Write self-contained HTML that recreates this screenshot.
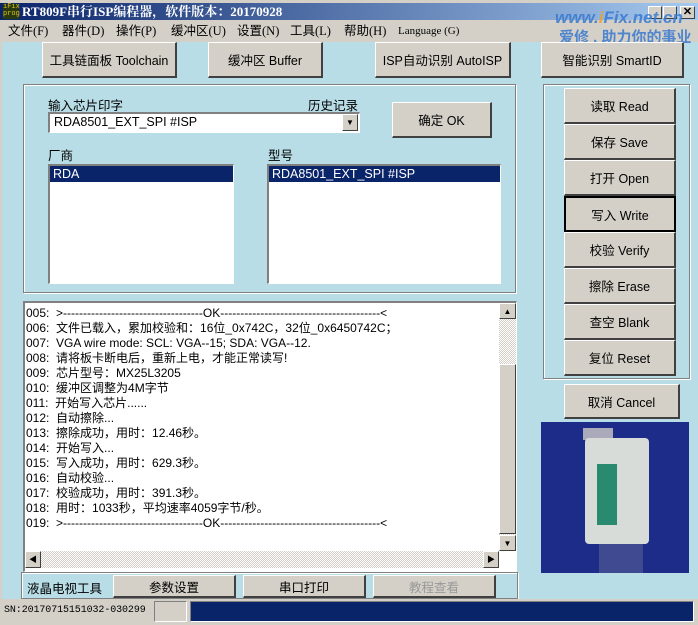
<!DOCTYPE html>
<html><head><meta charset="utf-8"><style>
*{margin:0;padding:0;box-sizing:border-box}
body{width:698px;height:625px;overflow:hidden;position:relative;background:#b9dde6;font-family:"Liberation Sans","Noto Sans CJK SC",sans-serif;font-size:12px;color:#000}
.a{position:absolute}
.btn{position:absolute;background:#d4d0c8;border-top:1px solid #fff;border-left:1px solid #fff;border-right:2px solid #404040;border-bottom:2px solid #404040;display:flex;align-items:center;justify-content:center;font-size:12.5px;white-space:nowrap}
.grp{position:absolute;border:1px solid #808080;box-shadow:inset 1px 1px 0 #fff,1px 1px 0 #fff}
.sunk{position:absolute;background:#fff;border-top:2px solid #808080;border-left:2px solid #808080;border-right:1px solid #fff;border-bottom:1px solid #fff}
.sel{background:#0a246a;color:#fff;padding-left:3px;height:16px;line-height:16px;font-size:12.5px}
.log div{height:15px;line-height:15px;font-size:12px;white-space:nowrap}
.sb{position:absolute;background:#d4d0c8;border-top:1px solid #fff;border-left:1px solid #fff;border-right:1px solid #404040;border-bottom:1px solid #404040;font-size:8px;display:flex;align-items:center;justify-content:center}
.m{position:absolute;top:23px;font-size:12.5px;line-height:17px;white-space:nowrap;font-family:'Liberation Serif','Noto Sans CJK SC',serif}
</style></head><body>
<div class="a" style="left:0;top:0;width:698px;height:3px;background:#d4d0c8"></div>
<div class="a" style="left:0;top:3px;width:698px;height:17px;background:linear-gradient(90deg,#0a246a,#a6caf0)"></div>
<div class="a" style="left:3px;top:4px;width:16px;height:15px;background:#2a3a10;color:#e0c020;font-size:7px;line-height:7px;font-family:'Liberation Mono',monospace">iFix<br>prog</div>
<div class="a" style="left:22px;top:3px;color:#fff;font-weight:bold;font-size:13px;line-height:17px;font-family:'Liberation Serif','Noto Serif CJK SC',serif">RT809F串行ISP编程器，软件版本：20170928</div>
<div class="a" style="left:648px;top:6px;width:14px;height:13px;background:#d4d0c8;border:1px solid #fff;border-right-color:#404040;border-bottom-color:#404040"></div>
<div class="a" style="left:663px;top:6px;width:14px;height:13px;background:#d4d0c8;border:1px solid #fff;border-right-color:#404040;border-bottom-color:#404040"></div>
<div class="a" style="left:680px;top:6px;width:15px;height:13px;background:#d4d0c8;border:1px solid #fff;border-right-color:#404040;border-bottom-color:#404040;font-size:11px;line-height:11px;text-align:center;font-weight:bold">✕</div>
<div class="a" style="left:0;top:20px;width:698px;height:22px;background:#d4d0c8"></div>
<div class="m" style="left:8px">文件(F)</div>
<div class="m" style="left:62px">器件(D)</div>
<div class="m" style="left:116px">操作(P)</div>
<div class="m" style="left:171px">缓冲区(U)</div>
<div class="m" style="left:237px">设置(N)</div>
<div class="m" style="left:290px">工具(L)</div>
<div class="m" style="left:344px">帮助(H)</div>
<div class="m" style="left:398px;font-size:11px">Language (G)</div>
<div class="a" style="left:555px;top:8px;color:#3a7ad0;font-style:italic;font-size:17px;font-weight:bold;opacity:.85">www.<span style="color:#f0a020">i</span>Fix.net.cn</div>
<div class="a" style="left:559px;top:26px;color:#3a7ad0;font-size:15px;font-weight:bold;opacity:.85">爱修 . 助力你的事业</div>
<div class="a" style="left:0;top:42px;width:2px;height:558px;background:#d4d0c8"></div>
<div class="btn" style="left:42px;top:42px;width:135px;height:36px">工具链面板 Toolchain</div>
<div class="btn" style="left:208px;top:42px;width:115px;height:36px">缓冲区 Buffer</div>
<div class="btn" style="left:375px;top:42px;width:136px;height:36px">ISP自动识别 AutoISP</div>
<div class="btn" style="left:541px;top:42px;width:143px;height:36px">智能识别 SmartID</div>
<div class="grp" style="left:23px;top:84px;width:493px;height:209px"></div>
<div class="a" style="left:48px;top:95px;font-size:12.5px">输入芯片印字</div>
<div class="a" style="left:308px;top:95px;font-size:12.5px">历史记录</div>
<div class="sunk" style="left:48px;top:112px;width:312px;height:21px;padding-left:4px;line-height:17px;font-size:12.5px">RDA8501_EXT_SPI #ISP</div>
<div class="sb" style="left:342px;top:114px;width:16px;height:17px">▼</div>
<div class="btn" style="left:392px;top:102px;width:100px;height:36px">确定 OK</div>
<div class="a" style="left:48px;top:145px;font-size:12.5px">厂商</div>
<div class="a" style="left:268px;top:145px;font-size:12.5px">型号</div>
<div class="sunk" style="left:48px;top:164px;width:186px;height:120px"><div class="sel">RDA</div></div>
<div class="sunk" style="left:267px;top:164px;width:234px;height:120px"><div class="sel">RDA8501_EXT_SPI #ISP</div></div>
<div class="sunk log" style="left:23px;top:301px;width:494px;height:271px;padding:3px 0 0 1px;overflow:hidden">
<div>005:&nbsp; &gt;-----------------------------------OK----------------------------------------&lt;</div>
<div>006:&nbsp; 文件已载入，累加校验和：16位_0x742C，32位_0x6450742C；</div>
<div>007:&nbsp; VGA wire mode: SCL: VGA--15; SDA: VGA--12.</div>
<div>008:&nbsp; 请将板卡断电后，重新上电，才能正常读写!</div>
<div>009:&nbsp; 芯片型号：MX25L3205</div>
<div>010:&nbsp; 缓冲区调整为4M字节</div>
<div>011:&nbsp; 开始写入芯片......</div>
<div>012:&nbsp; 自动擦除...</div>
<div>013:&nbsp; 擦除成功，用时：12.46秒。</div>
<div>014:&nbsp; 开始写入...</div>
<div>015:&nbsp; 写入成功，用时：629.3秒。</div>
<div>016:&nbsp; 自动校验...</div>
<div>017:&nbsp; 校验成功，用时：391.3秒。</div>
<div>018:&nbsp; 用时：1033秒，平均速率4059字节/秒。</div>
<div>019:&nbsp; &gt;-----------------------------------OK----------------------------------------&lt;</div>
</div>
<div class="a" style="left:499px;top:303px;width:17px;height:248px;background:repeating-conic-gradient(#d4d0c8 0 25%,#fff 0 50%) 0 0/2px 2px"></div>
<div class="sb" style="left:499px;top:303px;width:17px;height:16px">▲</div>
<div class="sb" style="left:499px;top:364px;width:17px;height:170px"></div>
<div class="sb" style="left:499px;top:535px;width:17px;height:16px">▼</div>
<div class="a" style="left:25px;top:551px;width:474px;height:17px;background:repeating-conic-gradient(#d4d0c8 0 25%,#fff 0 50%) 0 0/2px 2px"></div>
<div class="sb" style="left:25px;top:551px;width:16px;height:17px">◀</div>
<div class="sb" style="left:483px;top:551px;width:16px;height:17px">▶</div>
<div class="grp" style="left:21px;top:572px;width:497px;height:27px"></div>
<div class="a" style="left:27px;top:578px;font-size:12.5px">液晶电视工具</div>
<div class="btn" style="left:113px;top:575px;width:123px;height:23px">参数设置</div>
<div class="btn" style="left:243px;top:575px;width:123px;height:23px">串口打印</div>
<div class="btn" style="left:373px;top:575px;width:123px;height:23px;color:#999">教程查看</div>
<div class="grp" style="left:543px;top:84px;width:147px;height:295px"></div>
<div class="btn" style="left:564px;top:88px;width:112px;height:36px">读取 Read</div>
<div class="btn" style="left:564px;top:124px;width:112px;height:36px">保存 Save</div>
<div class="btn" style="left:564px;top:160px;width:112px;height:36px">打开 Open</div>
<div class="btn" style="left:564px;top:196px;width:112px;height:36px;border:2px solid #000">写入 Write</div>
<div class="btn" style="left:564px;top:232px;width:112px;height:36px">校验 Verify</div>
<div class="btn" style="left:564px;top:268px;width:112px;height:36px">擦除 Erase</div>
<div class="btn" style="left:564px;top:304px;width:112px;height:36px">查空 Blank</div>
<div class="btn" style="left:564px;top:340px;width:112px;height:36px">复位 Reset</div>
<div class="btn" style="left:564px;top:384px;width:116px;height:35px">取消 Cancel</div>
<div class="a" style="left:541px;top:422px;width:148px;height:151px;background:#1c2c88;overflow:hidden">
<div class="a" style="left:42px;top:6px;width:30px;height:12px;background:#aab"></div>
<div class="a" style="left:44px;top:16px;width:64px;height:106px;background:#d8dcd8;border-radius:4px"></div>
<div class="a" style="left:56px;top:42px;width:20px;height:61px;background:#2a8a70"></div>
<div class="a" style="left:58px;top:122px;width:44px;height:30px;background:#404a90"></div>
</div>
<div class="a" style="left:0;top:599px;width:698px;height:26px;background:#d4d0c8"></div>
<div class="a" style="left:4px;top:605px;font-family:'Liberation Mono',monospace;font-size:10px;letter-spacing:-0.1px">SN:20170715151032-030299</div>
<div class="a" style="left:154px;top:601px;width:33px;height:21px;border:1px solid #808080;border-right-color:#fff;border-bottom-color:#fff"></div>
<div class="a" style="left:190px;top:601px;width:504px;height:21px;background:#0a246a;border:1px solid #808080;border-right-color:#fff;border-bottom-color:#fff"></div>
</body></html>
